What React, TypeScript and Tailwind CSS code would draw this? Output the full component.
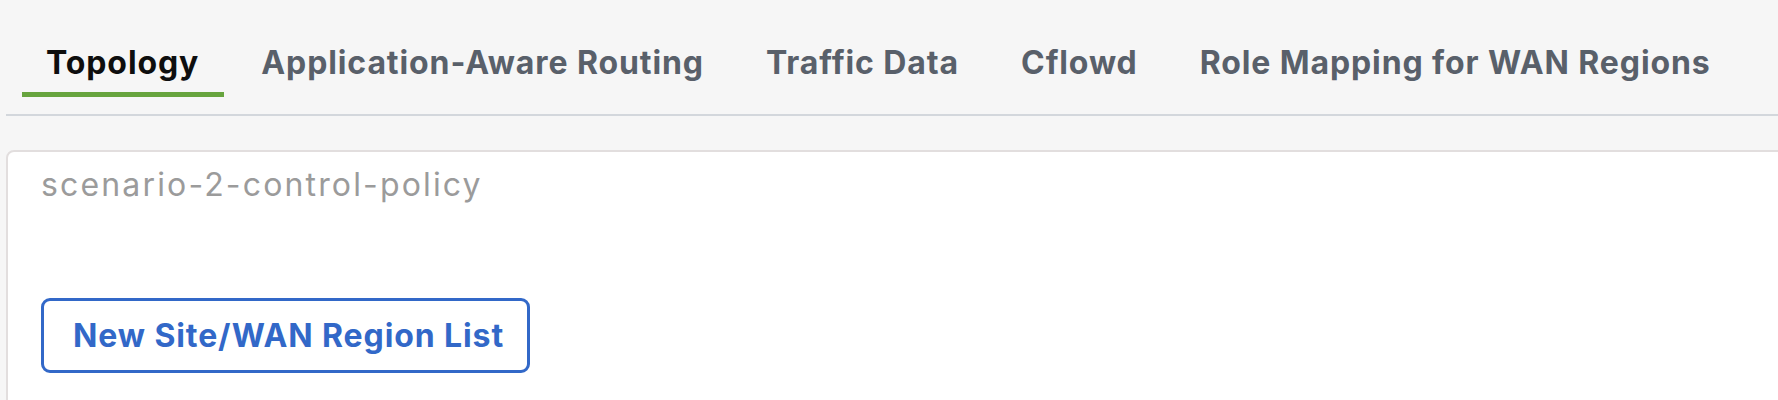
import React from "react";

const tabs = [
  { label: "Topology", active: true },
  { label: "Application-Aware Routing", active: false },
  { label: "Traffic Data", active: false },
  { label: "Cflowd", active: false },
  { label: "Role Mapping for WAN Regions", active: false },
];

export default function App() {
  return (
    <div
      className="w-[1778px] h-[400px] overflow-hidden bg-[#f6f6f6] pl-[6px]"
      style={{ fontFamily: "Inter, 'Noto Sans', sans-serif" }}
    >
      <div className="flex gap-[13px] pl-[16px] pt-[45px] pb-[17px] border-b-2 border-[#d3d7dc]">
        {tabs.map((t) => (
          <div key={t.label} className="flex flex-col">
            <div
              className={
                "pl-[24px] pr-[25px] h-[36px] leading-[36px] text-[32px] tracking-[0.9px] font-bold whitespace-nowrap " +
                (t.active ? "text-[#0e0e0e]" : "text-[#59606a]")
              }
            >
              {t.label}
            </div>
            <div
              className={
                "mt-[11px] h-[5px] " + (t.active ? "bg-[#67a43e]" : "bg-transparent")
              }
            />
          </div>
        ))}
      </div>
      <div className="mt-[34px] w-[1800px] h-[300px] bg-white border-2 border-[#e2dede] rounded-tl-[8px] pl-[33px] pt-[15px]">
        <div className="text-[32px] leading-[36px] tracking-[2.15px] text-[#9b9b9b] whitespace-nowrap">
          scenario-2-control-policy
        </div>
        <div className="mt-[95px]">
          <button className="w-[489px] h-[75px] pl-[29px] text-left border-[3px] border-[#3268c8] rounded-[9px] bg-white text-[#3268c8] text-[32px] tracking-[0.9px] font-bold whitespace-nowrap">
            New Site/WAN Region List
          </button>
        </div>
      </div>
    </div>
  );
}
